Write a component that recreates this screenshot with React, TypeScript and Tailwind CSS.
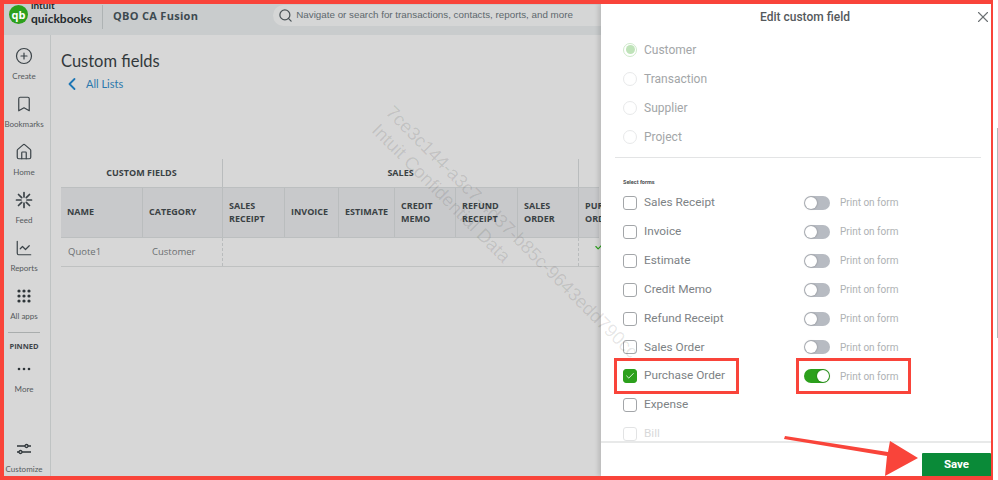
import { Bookmark, ChartLine, ChevronLeft, CirclePlus, House, Search, X, Check } from "lucide-react";
import type { ReactNode } from "react";

const FONT = "font-['Open_Sans','Liberation_Sans',sans-serif]";
const LATO = "font-['Lato','Liberation_Sans',sans-serif]";
const ROBOTO = "font-['Roboto','Liberation_Sans',sans-serif]";

function FeedIcon() {
  return (
    <svg width="18" height="18" viewBox="0 0 18 18" fill="none" stroke="#3b4348" strokeWidth="1.7" strokeLinecap="round">
      <path d="M9 1.5v4.5M9 12v4.5M1.5 9H6M12 9h4.5M3.5 3.5l3.2 3.2M11.3 11.3l3.2 3.2M14.5 3.5l-3.2 3.2M6.7 11.3l-3.2 3.2" />
    </svg>
  );
}

function AppsIcon() {
  return (
    <svg width="14" height="14" viewBox="0 0 14 14" fill="#2f363a">
      {[2, 7, 12].map((y) =>
        [2, 7, 12].map((x) => <circle key={`${x}-${y}`} cx={x} cy={y} r="1.6" />)
      )}
    </svg>
  );
}

function MoreIcon() {
  return (
    <svg width="14" height="14" viewBox="0 0 14 14" fill="#2f363a">
      <circle cx="2" cy="7" r="1.3" />
      <circle cx="7" cy="7" r="1.3" />
      <circle cx="12" cy="7" r="1.3" />
    </svg>
  );
}

function CustomizeIcon() {
  return (
    <svg width="16" height="14" viewBox="0 0 16 14" fill="none" stroke="#2f363a" strokeWidth="1.3">
      <path d="M1 4h8M12 4h3M1 10h2M6 10h9" />
      <circle cx="10.5" cy="4" r="1.5" />
      <circle cx="4.5" cy="10" r="1.5" />
    </svg>
  );
}

function NavItem({ icon, label, tall }: { icon: ReactNode; label: string; tall?: boolean }) {
  return (
    <div className={`flex flex-col items-center ${tall ? "h-[48px]" : ""}`}>
      <div className="h-5 flex items-center justify-center">{icon}</div>
      <span className={`${LATO} mt-[4px] text-[8px] leading-3 text-[#55595c] whitespace-nowrap`}>{label}</span>
    </div>
  );
}

function Sidebar() {
  const ic = { size: 18, color: "#3b4348", strokeWidth: 1.6 };
  return (
    <aside className="w-[47px] shrink-0 border-r border-[#bfc3c3] flex flex-col pt-[11px] pb-[1px] pr-[6px]">
      <NavItem tall icon={<CirclePlus {...ic} />} label="Create" />
      <NavItem tall icon={<Bookmark {...ic} />} label="Bookmarks" />
      <NavItem tall icon={<House {...ic} />} label="Home" />
      <NavItem tall icon={<FeedIcon />} label="Feed" />
      <NavItem tall icon={<ChartLine {...ic} />} label="Reports" />
      <NavItem icon={<AppsIcon />} label="All apps" />
      <div className="mx-[4px] mt-[10px] border-t border-[#a9adad]" />
      <div className="mt-[7px] text-center text-[7.5px] leading-3 font-bold text-[#3f464a]">PINNED</div>
      <div className="mt-[7px]">
        <NavItem icon={<MoreIcon />} label="More" />
      </div>
      <div className="mt-auto">
        <NavItem icon={<CustomizeIcon />} label="Customize" />
      </div>
    </aside>
  );
}

function Header() {
  return (
    <header className="h-[31px] shrink-0 bg-[#c9cccd] flex overflow-hidden">
      <div className="w-[47px] relative shrink-0">
        <div className="absolute left-[5px] top-[1px] w-[19px] h-[19px] rounded-full bg-[#2ca01c] flex items-center justify-center text-white text-[11px] font-bold leading-none">
          qb
        </div>
      </div>
      <div className={`${LATO} w-[51px] -ml-[20px] shrink-0 relative text-[#23292c]`}>
        <div className="absolute -top-[5px] left-0 text-[10px] leading-3 font-bold">intuit</div>
        <div className="absolute top-[7px] left-0 text-[12px] leading-4 font-bold">quickbooks</div>
      </div>
      <div className="ml-[20px] mt-[1px] h-[24px] border-l border-[#aeb3b4]" />
      <div className="ml-[10px] mt-[2px] text-[11px] leading-5 font-bold tracking-[0.3px] text-[#3d4a50] whitespace-nowrap">
        QBO CA Fusion
      </div>
      <div className="ml-[75px] mt-[1px] h-[21px] w-[340px] shrink-0 rounded-l-full bg-[#d5d6d6] flex items-center pl-[5px] gap-[3px]">
        <Search size={15} color="#4a5357" strokeWidth={2} />
        <span className="font-['Liberation_Sans',sans-serif] text-[9.8px] text-[#5d686d] whitespace-nowrap">
          Navigate or search for transactions, contacts, reports, and more
        </span>
      </div>
    </header>
  );
}

const tableCols = "grid-cols-[82px_80px_62px_54px_56px_61px_62px_61px_80px]";
const columns = [
  ["NAME"],
  ["CATEGORY"],
  ["SALES", "RECEIPT"],
  ["INVOICE"],
  ["ESTIMATE"],
  ["CREDIT", "MEMO"],
  ["REFUND", "RECEIPT"],
  ["SALES", "ORDER"],
  ["PURCHASE", "ORDER"],
];

function CustomFieldsTable() {
  return (
    <div className="mt-[65px] w-[538px] text-[#3a4144]">
      <div className="grid grid-cols-[162px_356px_20px] h-[28px] text-[9px] font-bold">
        <div className="flex items-center justify-center border-r border-[#b9bcbd]">CUSTOM FIELDS</div>
        <div className="flex items-center justify-center border-r border-[#b9bcbd]">SALES</div>
      </div>
      <div className={`grid ${tableCols} h-[51px] bg-[#c8c9cb] border-y border-[#bcbfc0] text-[9px] leading-[12.5px] font-bold`}>
        {columns.map((lines, i) => (
          <div
            key={i}
            className={`flex flex-col justify-center pl-[6px] border-[#babdbe] ${i < 8 ? "border-r" : ""}`}
          >
            {lines.map((l) => (
              <span key={l} className="whitespace-nowrap">{l}</span>
            ))}
          </div>
        ))}
      </div>
      <div className={`grid ${tableCols} h-[29px] border-b border-[#bfc1c1] text-[9.5px] text-[#6b6f71]`}>
        <div className="flex items-center pl-[7px]">Quote1</div>
        <div className="flex items-center pl-[9px] border-r border-dashed border-[#b9bcbd]">Customer</div>
        <div className="col-span-6 border-r border-dashed border-[#b9bcbd]" />
        <div className="pl-[15px] pt-[3px]">
          <Check size={11} color="#2ca01c" strokeWidth={2.5} />
        </div>
      </div>
    </div>
  );
}

function Radio({ label, checked }: { label: string; checked?: boolean }) {
  return (
    <div className="h-[29px] flex items-center text-[12px] text-[#a3a6a8]">
      <span className={`w-[14px] h-[14px] rounded-full border flex items-center justify-center ${checked ? "border-[#cfeacb]" : "border-[#e8e9ea]"}`}>
        {checked && <span className="w-[9px] h-[9px] rounded-full bg-[#bfe3b9]" />}
      </span>
      <span className="ml-[7px]">{label}</span>
    </div>
  );
}

function FormRow({ label, on, faded, noToggle }: { label: string; on?: boolean; faded?: boolean; noToggle?: boolean }) {
  return (
    <div className={`h-[28.9px] flex items-center shrink-0 ${faded ? "opacity-30" : ""}`}>
      <div className="w-[181px] flex items-center">
        <span className={`w-[14px] h-[14px] rounded-[3px] border flex items-center justify-center ${on ? "bg-[#2ca01c] border-[#2ca01c]" : "border-[#a3a6a9]"}`}>
          {on && <Check size={10} color="#ffffff" strokeWidth={2} />}
        </span>
        <span className="ml-[7px] text-[11.8px] text-[#7d8285]">{label}</span>
      </div>
      {!noToggle && (
        <div className="flex items-center">
          <span className={`w-[26px] h-[14px] rounded-full flex items-center p-[1px] ${on ? "bg-[#2ca01c] justify-end" : "bg-[#b7bbc2] justify-start"}`}>
            <span className="w-[12px] h-[12px] rounded-full bg-white shadow-[0_0_2px_rgba(0,0,0,0.35)]" />
          </span>
          <span className="ml-[10px] text-[10px] text-[#aeb1b3]">Print on form</span>
        </div>
      )}
    </div>
  );
}

function Drawer() {
  return (
    <div className={`${ROBOTO} absolute right-0 top-0 bottom-0 w-[390px] bg-white shadow-[-3px_0_4px_rgba(0,0,0,0.12)] flex flex-col`}>
      <div className="relative h-6 shrink-0 flex items-center justify-center pl-[18px] pt-[2px] text-[12px] font-medium text-[#55595c]">
        Edit custom field
        <X size={18} color="#6b7073" strokeWidth={1.5} className="absolute right-[-1px] top-[4px]" />
      </div>
      <div className="mt-[7px] pl-[22px] shrink-0">
        <Radio checked label="Customer" />
        <Radio label="Transaction" />
        <Radio label="Supplier" />
        <Radio label="Project" />
      </div>
      <div className="ml-[14px] mt-[6px] mr-[10px] border-t border-[#e3e4e5] shrink-0" />
      <div className="mt-[20px] pl-[22px] text-[5.5px] leading-2 font-bold text-[#4a4e50] shrink-0">Select forms</div>
      <div className="mt-[2.5px] pl-[22px] flex-1 min-h-0 overflow-hidden flex flex-col">
        <FormRow label="Sales Receipt" />
        <FormRow label="Invoice" />
        <FormRow label="Estimate" />
        <FormRow label="Credit Memo" />
        <FormRow label="Refund Receipt" />
        <FormRow label="Sales Order" />
        <FormRow on label="Purchase Order" />
        <FormRow noToggle label="Expense" />
        <FormRow noToggle faded label="Bill" />
      </div>
      <div className="h-[35px] shrink-0 border-t-2 border-[#e8e9e9] flex justify-end items-end">
        <button className="w-[69px] h-[23px] bg-[#0a8a38] rounded-t-[1px] text-white text-[11.5px] font-bold">Save</button>
      </div>
    </div>
  );
}

export default function App() {
  return (
    <div className={`${FONT} relative w-[998px] h-[480px] overflow-hidden bg-white`}>
      <div className="relative w-[993px] h-[480px] border-t-4 border-b-4 border-l-4 border-r-2 border-[#f9443a] bg-[#d7d7d7] flex flex-col overflow-hidden">
        <Header />
        <div className="flex-1 min-h-0 flex">
          <Sidebar />
          <main className="flex-1 min-w-0 pl-[10px] pt-[14px] overflow-hidden">
            <h1 className={`${LATO} text-[16.5px] leading-6 text-[#33393c]`}>Custom fields</h1>
            <div className={`${LATO} mt-[1px] flex items-center text-[11px] leading-4 text-[#2b77ad]`}>
              <ChevronLeft size={20} color="#1d76b5" strokeWidth={2.2} className="ml-[1px]" />
              <span className="ml-[4px]">All Lists</span>
            </div>
            <CustomFieldsTable />
          </main>
        </div>
        <Drawer />
      </div>

      {/* watermark, lies over both page and drawer */}
      <div className="pointer-events-none absolute left-[396px] top-[102px] origin-top-left rotate-[45deg] font-['Liberation_Sans',sans-serif] text-[18.5px] leading-5 text-black/10 whitespace-nowrap">
        7ce3c144-a3c7-4d37-b85c-9643edd790cc
      </div>
      <div className="pointer-events-none absolute left-[382px] top-[120px] origin-top-left rotate-[45deg] font-['Liberation_Sans',sans-serif] text-[18.5px] leading-5 text-black/10 whitespace-nowrap">
        Intuit Confidential Data
      </div>

      {/* annotation boxes */}
      <div className="absolute left-[614px] top-[358px] w-[125px] h-[36px] border-[3px] border-[#f9443a]" />
      <div className="absolute left-[796px] top-[358px] w-[115px] h-[36px] border-[3px] border-[#f9443a]" />
      <svg className="absolute left-[780px] top-[430px]" width="145" height="50" viewBox="0 0 145 50" fill="#f9443a">
        <path d="M5 6 L108 22 L110 11 L138 28 L105 46 L107 26 L4 9 Z" />
      </svg>

      {/* page scrollbar sliver */}
      <div className="absolute left-[997px] top-[128px] w-px h-[210px] bg-[#b5b5b5]" />
    </div>
  );
}
